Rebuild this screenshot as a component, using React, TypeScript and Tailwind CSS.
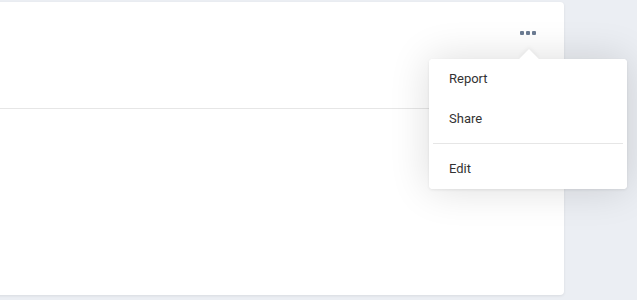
const items = ["Report", "Share"];

export default function App() {
  return (
    <div
      className="relative h-[300px] w-[637px] overflow-hidden bg-[#ebeef3] pt-[2px]"
      style={{ fontFamily: "Roboto, 'Liberation Sans', sans-serif" }}
    >
      <div className="-ml-2 flex h-[293px] w-[572px] flex-col rounded bg-white shadow-[0_1px_3px_rgba(0,0,0,0.08)]">
        <div className="flex h-[107px] items-start justify-end border-b border-[#e6e6e6] pr-7 pt-[29px]">
          <button type="button" className="flex gap-[2px] p-0" aria-label="More">
            <span className="h-1 w-1 rounded-[1px] bg-[#6c7c93]" />
            <span className="h-1 w-1 rounded-[1px] bg-[#6c7c93]" />
            <span className="h-1 w-1 rounded-[1px] bg-[#6c7c93]" />
          </button>
        </div>
        <div className="flex-1" />
      </div>

      <div className="absolute left-[429px] top-[59px] w-[198px] rounded bg-white shadow-[0_0_40px_rgba(0,0,0,0.14),0_1px_3px_rgba(0,0,0,0.08)]">
        <div className="absolute -top-[7px] left-[93px] h-[14px] w-[14px] rotate-45 bg-white shadow-[-2px_-2px_4px_rgba(0,0,0,0.04)]" />
        <div className="relative rounded bg-white">
          {items.map((label) => (
            <div key={label} className="flex h-10 items-center px-5 text-[13px] text-[#333]">
              {label}
            </div>
          ))}
          <div className="mx-1 mb-[5px] mt-1 h-px bg-[#e6e6e6]" />
          <div className="flex h-10 items-center px-5 text-[13px] text-[#333]">Edit</div>
        </div>
      </div>
    </div>
  );
}
